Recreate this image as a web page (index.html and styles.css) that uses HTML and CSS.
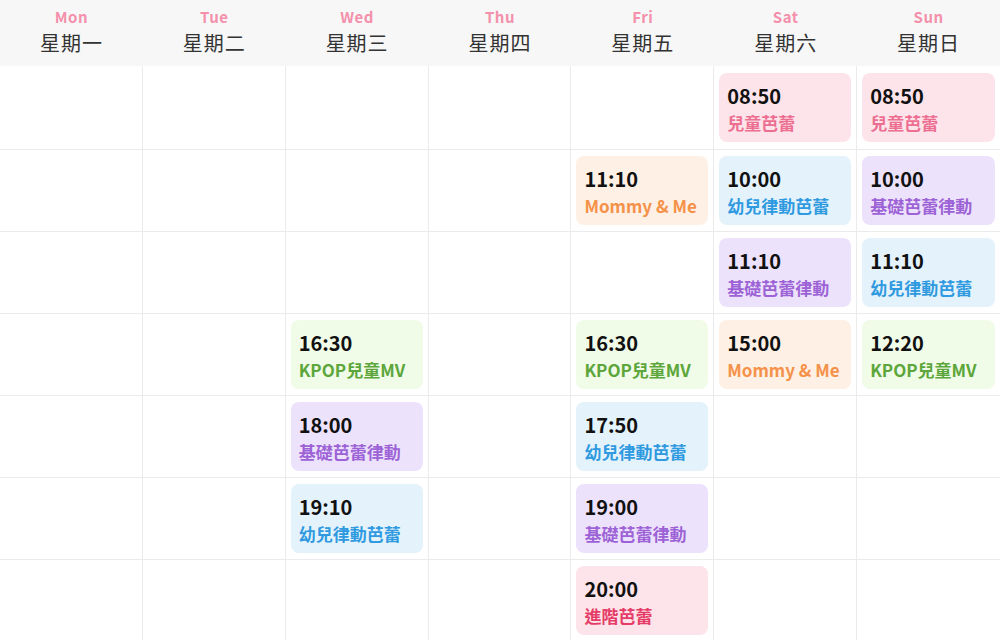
FILE: index.html
```html
<!DOCTYPE html>
<html lang="zh-Hant">
<head>
<meta charset="utf-8">
<link rel="stylesheet" href="styles.css">
</head>
<body>
<div class="schedule">
  <div class="head">
    <div class="day"><span class="en">Mon</span><span class="zh">星期一</span></div>
    <div class="day"><span class="en">Tue</span><span class="zh">星期二</span></div>
    <div class="day"><span class="en">Wed</span><span class="zh">星期三</span></div>
    <div class="day"><span class="en">Thu</span><span class="zh">星期四</span></div>
    <div class="day"><span class="en">Fri</span><span class="zh">星期五</span></div>
    <div class="day"><span class="en">Sat</span><span class="zh">星期六</span></div>
    <div class="day"><span class="en">Sun</span><span class="zh">星期日</span></div>
  </div>
  <div class="grid">
    <!-- row 1 -->
    <div class="cell"></div><div class="cell"></div><div class="cell"></div><div class="cell"></div><div class="cell"></div>
    <div class="cell"><div class="card pink"><span class="time">08:50</span><span class="name">兒童芭蕾</span></div></div>
    <div class="cell"><div class="card pink"><span class="time">08:50</span><span class="name">兒童芭蕾</span></div></div>
    <!-- row 2 -->
    <div class="cell"></div><div class="cell"></div><div class="cell"></div><div class="cell"></div>
    <div class="cell"><div class="card orange"><span class="time">11:10</span><span class="name">Mommy &amp; Me</span></div></div>
    <div class="cell"><div class="card blue"><span class="time">10:00</span><span class="name">幼兒律動芭蕾</span></div></div>
    <div class="cell"><div class="card purple"><span class="time">10:00</span><span class="name">基礎芭蕾律動</span></div></div>
    <!-- row 3 -->
    <div class="cell"></div><div class="cell"></div><div class="cell"></div><div class="cell"></div><div class="cell"></div>
    <div class="cell"><div class="card purple"><span class="time">11:10</span><span class="name">基礎芭蕾律動</span></div></div>
    <div class="cell"><div class="card blue"><span class="time">11:10</span><span class="name">幼兒律動芭蕾</span></div></div>
    <!-- row 4 -->
    <div class="cell"></div><div class="cell"></div>
    <div class="cell"><div class="card green"><span class="time">16:30</span><span class="name">KPOP兒童MV</span></div></div>
    <div class="cell"></div>
    <div class="cell"><div class="card green"><span class="time">16:30</span><span class="name">KPOP兒童MV</span></div></div>
    <div class="cell"><div class="card orange"><span class="time">15:00</span><span class="name">Mommy &amp; Me</span></div></div>
    <div class="cell"><div class="card green"><span class="time">12:20</span><span class="name">KPOP兒童MV</span></div></div>
    <!-- row 5 -->
    <div class="cell"></div><div class="cell"></div>
    <div class="cell"><div class="card purple"><span class="time">18:00</span><span class="name">基礎芭蕾律動</span></div></div>
    <div class="cell"></div>
    <div class="cell"><div class="card blue"><span class="time">17:50</span><span class="name">幼兒律動芭蕾</span></div></div>
    <div class="cell"></div><div class="cell"></div>
    <!-- row 6 -->
    <div class="cell"></div><div class="cell"></div>
    <div class="cell"><div class="card blue"><span class="time">19:10</span><span class="name">幼兒律動芭蕾</span></div></div>
    <div class="cell"></div>
    <div class="cell"><div class="card purple"><span class="time">19:00</span><span class="name">基礎芭蕾律動</span></div></div>
    <div class="cell"></div><div class="cell"></div>
    <!-- row 7 -->
    <div class="cell"></div><div class="cell"></div><div class="cell"></div><div class="cell"></div>
    <div class="cell"><div class="card red"><span class="time">20:00</span><span class="name">進階芭蕾</span></div></div>
    <div class="cell"></div><div class="cell"></div>
  </div>
</div>
</body>
</html>
```
FILE: styles.css
```css
* { box-sizing: border-box; }
html, body {
  margin: 0;
  padding: 0;
  background: #ffffff;
}
body {
  font-family: "Noto Sans CJK TC", "Noto Sans", sans-serif;
  width: 1000px;
  height: 640px;
  overflow: hidden;
}
.schedule {
  width: 1000px;
}
.head {
  display: grid;
  grid-template-columns: repeat(7, 1fr);
  height: 66px;
  background: #f7f7f7;
}
.day {
  display: flex;
  flex-direction: column;
  align-items: center;
  padding-top: 7px;
}
.en {
  color: #f490ab;
  font-size: 15px;
  font-weight: 700;
  line-height: 20px;
  letter-spacing: 0.5px;
}
.zh {
  color: #333333;
  font-size: 20px;
  line-height: 32px;
  letter-spacing: 1px;
}
.grid {
  display: grid;
  grid-template-columns: repeat(7, 1fr);
  grid-template-rows: 84px repeat(6, 82px);
}
.cell {
  border-right: 1px solid #ebebeb;
  border-bottom: 1px solid #ebebeb;
  padding: 0 5px;
  display: flex;
  align-items: center;
}
.cell:nth-child(7n) { border-right: none; }
.card {
  width: 100%;
  height: 69px;
  border-radius: 8px;
  padding: 3px 8px 0;
  display: flex;
  flex-direction: column;
  justify-content: center;
  gap: 2px;
}
.time {
  color: #111111;
  font-size: 20px;
  font-weight: 700;
  line-height: 26px;
}
.name {
  font-size: 17px;
  font-weight: 700;
  line-height: 24px;
  white-space: nowrap;
}
.pink { background: #fde4ea; }
.pink .name { color: #ec6f92; }
.red { background: #fde4ea; }
.red .name { color: #e53b67; }
.blue { background: #e3f2fb; }
.blue .name { color: #2f9ae0; }
.purple { background: #ede2fb; }
.purple .name { color: #9c62d6; }
.orange { background: #fef0e4; }
.orange .name { color: #f5924a; }
.green { background: #f0fbe8; }
.green .name { color: #5da63b; }
```
